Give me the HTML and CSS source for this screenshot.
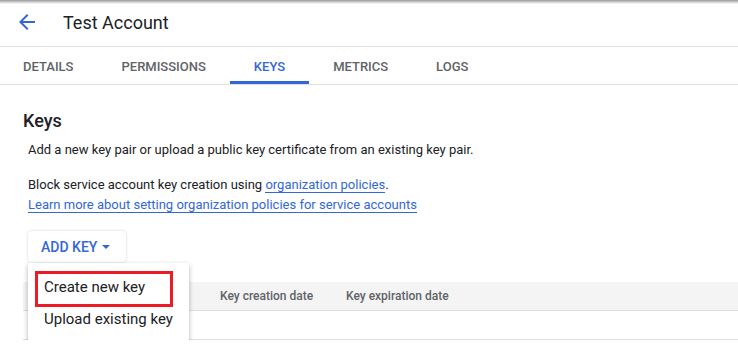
FILE: index.html
```html
<!DOCTYPE html>
<html>
<head>
    <title>Test Account</title>
    <link rel="stylesheet" href="styles.css">
</head>
<body>

    <div class="top-shadow"></div>

    <!-- Page header -->
    <div class="header">
        <svg class="back" width="24" height="24" viewBox="0 0 24 24"><path d="M20 11H7.83l5.59-5.59L12 4l-8 8 8 8 1.41-1.41L7.83 13H20v-2z"/></svg>
        <h1 class="title">Test Account</h1>
    </div>

    <!-- Tabs -->
    <div class="tabs">
        <div class="tab">Details</div>
        <div class="tab">Permissions</div>
        <div class="tab active">Keys</div>
        <div class="tab">Metrics</div>
        <div class="tab">Logs</div>
    </div>

    <div class="content">
        <h2 class="section-title">Keys</h2>
        <p class="intro">Add a new key pair or upload a public key certificate from an existing key pair.</p>
        <p class="policy">Block service account key creation using <a href="#">organization policies</a>.<br>
            <a href="#">Learn more about setting organization policies for service accounts</a></p>

        <div class="add-key">
            <div class="add-key-button">Add key <span class="caret"></span></div>
            <!-- Open dropdown menu -->
            <div class="menu">
                <div class="menu-item highlighted">Create new key</div>
                <div class="menu-item">Upload existing key</div>
            </div>
        </div>

        <div class="keys-table">
            <div class="row head">
                <div class="cell first"></div>
                <div class="cell created">Key creation date</div>
                <div class="cell">Key expiration date</div>
            </div>
            <div class="row"></div>
        </div>
    </div>

</body>
</html>
```

FILE: styles.css
```css
/* Main page styles */
body, h1, h2, p {
    margin: 0;
    padding: 0;
}

body {
    font-family: Roboto, "Liberation Sans", Arial, sans-serif;
    color: #202124;
    background: #fff;
    overflow: hidden;
}

.top-shadow {
    height: 4px;
    background: linear-gradient(rgba(0,0,0,0.4), rgba(0,0,0,0));
}

/* Header */
.header {
    height: 44px;
    padding-bottom: 2px;
    display: flex;
    align-items: center;
    border-bottom: 1px solid #e0e0e0;
    margin-top: -4px;
}

.back {
    fill: #3367d6;
    margin-left: 15px;
    margin-right: 24px;
}

.title {
    font-size: 18px;
    font-weight: 400;
    margin-top: 1px;
}

/* Tabs */
.tabs {
    display: flex;
    height: 37px;
    margin-left: -1px;
    border-bottom: 1px solid #e0e0e0;
}

.tab {
    padding: 0 24px;
    height: 34px;
    text-transform: uppercase;
    font-size: 13px;
    font-weight: 500;
    line-height: 40px;
    color: #5f6368;
    border-bottom: 3px solid transparent;
}

.tab.active {
    color: #3367d6;
    border-bottom-color: #3367d6;
}

/* Content */
.content {
    padding: 24px 0 0 23px;
}

.section-title {
    font-size: 18px;
    font-weight: 500;
    line-height: 24px;
}

.intro, .policy {
    margin-left: 5px;
    font-size: 13px;
    line-height: 20px;
}

.intro {
    margin-top: 7px;
}

.policy {
    margin-top: 15px;
}

.policy a {
    color: #3367d6;
    text-decoration: none;
    border-bottom: 1px solid #3367d6;
}

/* Add key button and its menu */
.add-key {
    position: relative;
    display: flex;
    margin: 16px 0 0 5px;
}

.add-key-button {
    display: flex;
    align-items: center;
    height: 31px;
    padding: 0 16px 0 13px;
    font-size: 14px;
    font-weight: 500;
    text-transform: uppercase;
    color: #3367d6;
    border-radius: 4px;
    box-shadow: 0 0 3px rgba(0,0,0,0.18);
}

.caret {
    margin-left: 5px;
    border-left: 4px solid transparent;
    border-right: 4px solid transparent;
    border-top: 4px solid #3367d6;
}

.menu {
    position: absolute;
    top: 32px;
    left: 0;
    width: 161px;
    padding: 8px 0 7px;
    background: #fff;
    border-radius: 2px;
    box-shadow: 0 2px 5px rgba(0,0,0,0.3);
    z-index: 2;
}

.menu-item {
    position: relative;
    padding-left: 16px;
    font-size: 15px;
    line-height: 32px;
    color: #202124;
}

/* Red annotation box */
.menu-item.highlighted::after {
    content: "";
    position: absolute;
    top: 0;
    left: 7px;
    right: 16px;
    bottom: -4px;
    border: 3px solid #ed1c24;
}

/* Keys table */
.keys-table {
    margin-top: 20px;
}

.row {
    display: flex;
    height: 28px;
    border-bottom: 1px solid #e0e0e0;
}

.row.head {
    background: #f4f4f4;
    font-size: 12px;
    font-weight: 500;
    color: #5f6368;
    line-height: 29px;
}

.cell.first {
    width: 197px;
}

.cell.created {
    width: 126px;
}
```
